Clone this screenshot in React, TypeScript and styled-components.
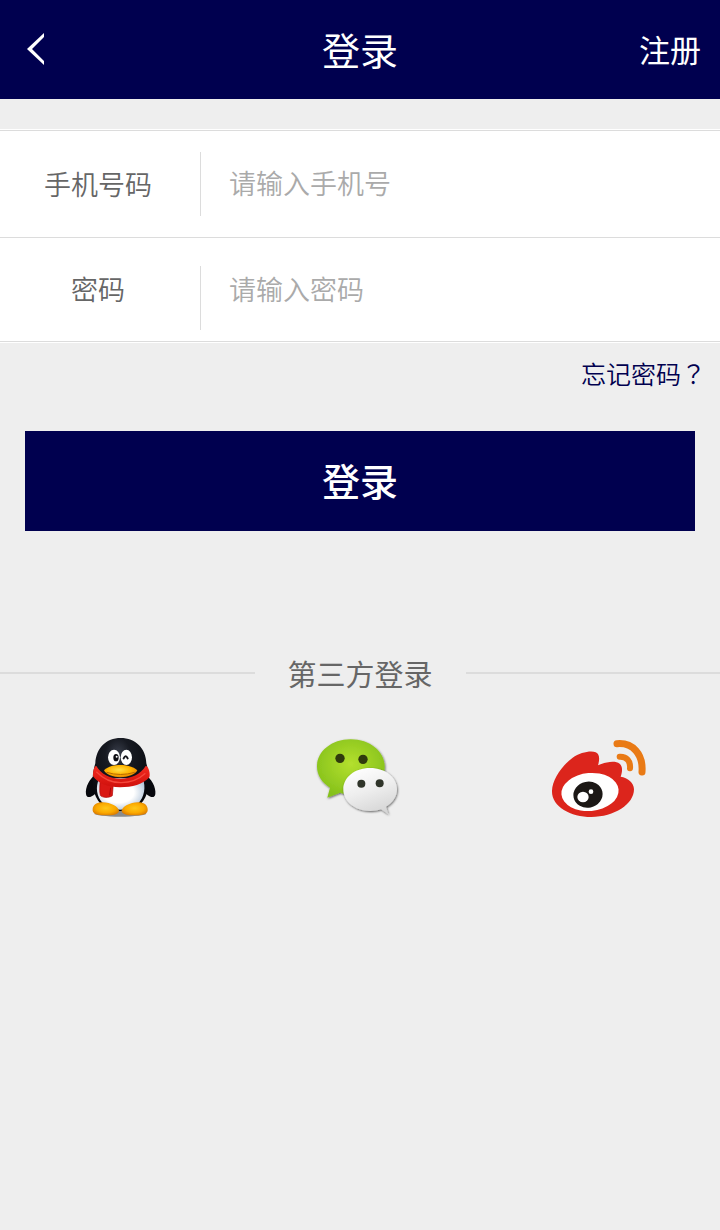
import React from "react";
import styled, { createGlobalStyle } from "styled-components";

const navy = "#00004f";
const line = "#dcdcdc";

const GlobalStyle = createGlobalStyle`
  * { box-sizing: border-box; }
  body {
    margin: 0;
    background: #eeeeee;
    color: #666666;
    font-family: "Noto Sans CJK SC", "Noto Sans", sans-serif;
    font-weight: 350;
  }
  button, input { font: inherit; color: inherit; border: 0; padding: 0; }
  a { text-decoration: none; }
  svg { display: block; }
`;

const Page = styled.div`
  min-height: 100vh;
  background: #eeeeee;
`;

const Header = styled.header`
  display: grid;
  grid-template-columns: 1fr auto 1fr;
  align-items: center;
  height: 99px;
  padding-bottom: 2px;
  background: ${navy};
  color: #ffffff;
`;

const BackButton = styled.button`
  justify-self: start;
  padding: 17px 20px 16px 26px;
  background: none;
  cursor: pointer;
`;

const Title = styled.h1`
  margin: 0;
  font-size: 38px;
  font-weight: 400;
  line-height: 56px;
`;

const RegisterLink = styled.a`
  justify-self: end;
  padding-right: 19px;
  color: #ffffff;
  font-size: 31px;
  font-weight: 400;
  line-height: 44px;
`;

const Fields = styled.div`
  margin-top: 30px;
  padding: 1px 0;
  background: #ffffff;
`;

const FieldRow = styled.div<{ $height: number }>`
  display: flex;
  align-items: center;
  height: ${(p) => p.$height}px;
  border-top: 1px solid ${line};
  font-size: 27px;

  &:last-child { border-bottom: 1px solid ${line}; }
`;

const FieldLabel = styled.label`
  flex: 0 0 200px;
  padding: 0 4px 2px 0;
  text-align: center;
`;

const Divider = styled.span<{ $bottom: number }>`
  align-self: flex-end;
  width: 1px;
  height: 64px;
  margin-bottom: ${(p) => p.$bottom}px;
  background: ${line};
`;

const FieldInput = styled.input`
  flex: 1;
  min-width: 0;
  height: 64px;
  padding: 0 28px 3px;
  background: none;
  outline: none;

  &::placeholder { color: #aaaaaa; opacity: 1; }
`;

const ForgotRow = styled.div`
  display: flex;
  justify-content: flex-end;
  padding: 12px 14px 40px;
`;

const ForgotLink = styled.a`
  color: ${navy};
  font-family: "Noto Sans CJK TC", "Noto Sans CJK SC", sans-serif;
  font-size: 25px;
  line-height: 36px;
`;

const Submit = styled.div`
  display: flex;
  padding: 0 25px;
`;

const SubmitButton = styled.button`
  flex: 1;
  height: 100px;
  padding-bottom: 4px;
  background: ${navy};
  color: #ffffff;
  font-size: 38px;
  font-weight: 500;
  cursor: pointer;
`;

const ThirdParty = styled.section`
  padding-top: 122px;
`;

const SectionTitle = styled.h2`
  display: flex;
  align-items: center;
  gap: 33px;
  margin: 0;
  font-size: 29px;
  font-weight: 400;
  line-height: 40px;

  &::before, &::after {
    content: "";
    flex: 1;
    height: 2px;
    background: ${line};
  }
`;

const Providers = styled.div`
  display: grid;
  grid-template-columns: repeat(3, 1fr);
  justify-items: center;
  padding-top: 32px;
`;

const ProviderButton = styled.button`
  background: none;
  cursor: pointer;
`;

const QQIcon = () => (
  <svg width="100" height="105" viewBox="0 0 300 315" aria-hidden="true">
    <defs>
      <radialGradient id="qqBody" cx="45%" cy="22%" r="75%">
        <stop offset="0" stopColor="#3a3f4c" />
        <stop offset="0.3" stopColor="#171a22" />
        <stop offset="1" stopColor="#04050a" />
      </radialGradient>
      <radialGradient id="qqBelly" cx="45%" cy="45%" r="60%">
        <stop offset="0.55" stopColor="#ffffff" />
        <stop offset="1" stopColor="#b4c6da" />
      </radialGradient>
      <radialGradient id="qqFoot" cx="50%" cy="45%" r="60%">
        <stop offset="0" stopColor="#ffc81a" />
        <stop offset="0.6" stopColor="#fba900" />
        <stop offset="1" stopColor="#d97800" />
      </radialGradient>
      <radialGradient id="qqBeak" cx="45%" cy="40%" r="60%">
        <stop offset="0" stopColor="#ffe14a" />
        <stop offset="0.6" stopColor="#ffb400" />
        <stop offset="1" stopColor="#e88000" />
      </radialGradient>
      <linearGradient id="qqScarf" x1="0" y1="0" x2="0" y2="1">
        <stop offset="0" stopColor="#f32b20" />
        <stop offset="1" stopColor="#cf100c" />
      </linearGradient>
    </defs>
    <ellipse cx="151" cy="266" rx="78" ry="9" fill="#8b8b8b" />
    <path d="M80 146C58 160 45 188 48 207C50 221 62 218 76 206L96 184ZM222 146C245 160 259 188 256 207C254 221 242 218 228 206L208 184Z" fill="#07080d" />
    <path d="M152 39C108 39 78 70 76 115C66 145 64 188 78 216C94 249 119 258 151 258C184 258 211 248 226 217C240 187 238 145 229 115C228 70 196 39 152 39Z" fill="url(#qqBody)" />
    <path d="M88 160C75 186 80 216 98 234C114 250 132 254 151 254C174 254 190 249 206 234C222 217 229 187 218 160Z" fill="url(#qqBelly)" />
    <path d="M98 232C122 232 146 246 147 257C147 268 130 271 106 271C80 271 66 266 68 252C69 240 80 232 98 232Z" fill="url(#qqFoot)" />
    <path d="M204 232C180 232 156 246 155 257C155 268 172 271 196 271C222 271 235 266 233 252C232 240 222 232 204 232Z" fill="url(#qqFoot)" />
    <ellipse cx="132" cy="97" rx="18" ry="23" fill="#ffffff" />
    <ellipse cx="169" cy="97" rx="17" ry="23" fill="#ffffff" />
    <ellipse cx="138" cy="98" rx="8" ry="11" fill="#0c0c12" />
    <circle cx="140" cy="95" r="3" fill="#ffffff" />
    <path d="M161 100Q167 88 173 100" fill="none" stroke="#15151c" strokeWidth="6" strokeLinecap="round" />
    <path d="M102 136C115 123 134 120 151 120C169 120 190 124 202 136C197 148 174 157 151 157C129 157 107 148 102 136Z" fill="url(#qqBeak)" />
    <path d="M110 142Q151 155 194 142" fill="none" stroke="#b86a00" strokeWidth="3" />
    <path d="M91 165C89 184 88 200 91 211C97 219 118 219 127 212L130 176Z" fill="#d91814" stroke="#ab0909" strokeWidth="2" />
    <path d="M79 123C72 122 68 143 69 154C84 176 115 187 150 187C187 187 219 178 238 157C242 148 236 123 227 123C211 148 184 161 152 161C118 161 93 147 79 123Z" fill="url(#qqScarf)" />
    <path d="M79 140C104 166 129 173 153 173C179 173 204 166 226 145" fill="none" stroke="#f5473c" strokeWidth="4" />
    <path d="M122 188L119 211" stroke="#a90909" strokeWidth="3" />
  </svg>
);

const WeChatIcon = () => (
  <svg width="100" height="105" viewBox="15 0 300 315" aria-hidden="true">
    <defs>
      <radialGradient id="wcGreen" cx="50%" cy="42%" r="58%">
        <stop offset="0" stopColor="#b4e02e" />
        <stop offset="1" stopColor="#85c11b" />
      </radialGradient>
      <linearGradient id="wcWhite" x1="0.2" y1="0" x2="0.6" y2="1">
        <stop offset="0" stopColor="#ffffff" />
        <stop offset="0.5" stopColor="#eeeeee" />
        <stop offset="1" stopColor="#d6d6d6" />
      </linearGradient>
      <filter id="wcShadow" x="-20%" y="-20%" width="140%" height="140%">
        <feDropShadow dx="2" dy="3" stdDeviation="3" floodColor="#000000" floodOpacity="0.6" />
      </filter>
    </defs>
    <path d="M137 43C80 43 36 79 36 124C36 150 50 173 75 188L67 218L105 203C115 206 126 207 137 207C194 207 239 173 239 125C239 79 194 43 137 43Z" fill="url(#wcGreen)" filter="url(#wcShadow)" />
    <circle cx="105" cy="100" r="14" fill="#303a0d" />
    <circle cx="174" cy="103" r="14" fill="#303a0d" />
    <path d="M195 129C149 129 115 157 115 193C115 230 150 258 196 258C207 258 218 256 228 253L250 268L243 245C264 233 276 214 276 193C276 157 241 129 195 129Z" fill="url(#wcWhite)" filter="url(#wcShadow)" />
    <circle cx="169" cy="176" r="12" fill="#30352a" />
    <circle cx="224" cy="175" r="12" fill="#30352a" />
  </svg>
);

const WeiboIcon = () => (
  <svg width="120" height="105" viewBox="0 0 360 315" aria-hidden="true">
    <path d="M36 197C37 165 65 122 98 98C120 83 152 76 167 82C180 88 179 104 174 121C194 112 224 105 239 116C249 124 247 142 242 155C263 158 282 173 282 193C282 238 223 276 154 276C91 276 34 244 36 197Z" fill="#dc251c" />
    <ellipse cx="150" cy="201" rx="86" ry="57" transform="rotate(-5 150 201)" fill="#ffffff" />
    <ellipse cx="144" cy="209" rx="44" ry="39" transform="rotate(-12 144 209)" fill="#1c1816" />
    <ellipse cx="129" cy="216" rx="17" ry="16" fill="#ffffff" />
    <circle cx="153" cy="200" r="7" fill="#ffffff" />
    <path d="M231 56C278 52 310 87 306 141" fill="none" stroke="#e97a15" strokeWidth="21" strokeLinecap="round" />
    <path d="M239 95C260 94 272 109 270 130" fill="none" stroke="#e97a15" strokeWidth="18" strokeLinecap="round" />
  </svg>
);

export default function App() {
  return (
    <Page>
      <GlobalStyle />
      <Header>
        <BackButton type="button" aria-label="返回">
          <svg width="18" height="32" viewBox="0 0 18 32" aria-hidden="true">
            <path d="M18 0V4L6 16L18 28V32L1 16Z" fill="#ffffff" />
          </svg>
        </BackButton>
        <Title>登录</Title>
        <RegisterLink href="#register">注册</RegisterLink>
      </Header>
      <form onSubmit={(e) => e.preventDefault()}>
        <Fields>
          <FieldRow $height={107}>
            <FieldLabel htmlFor="phone">手机号码</FieldLabel>
            <Divider $bottom={21} />
            <FieldInput id="phone" type="tel" placeholder="请输入手机号" />
          </FieldRow>
          <FieldRow $height={105}>
            <FieldLabel htmlFor="password">密码</FieldLabel>
            <Divider $bottom={11} />
            <FieldInput id="password" type="password" placeholder="请输入密码" />
          </FieldRow>
        </Fields>
        <ForgotRow>
          <ForgotLink href="#forgot">忘记密码？</ForgotLink>
        </ForgotRow>
        <Submit>
          <SubmitButton type="submit">登录</SubmitButton>
        </Submit>
      </form>
      <ThirdParty>
        <SectionTitle>第三方登录</SectionTitle>
        <Providers>
          <ProviderButton type="button" aria-label="QQ"><QQIcon /></ProviderButton>
          <ProviderButton type="button" aria-label="微信"><WeChatIcon /></ProviderButton>
          <ProviderButton type="button" aria-label="微博"><WeiboIcon /></ProviderButton>
        </Providers>
      </ThirdParty>
    </Page>
  );
}
